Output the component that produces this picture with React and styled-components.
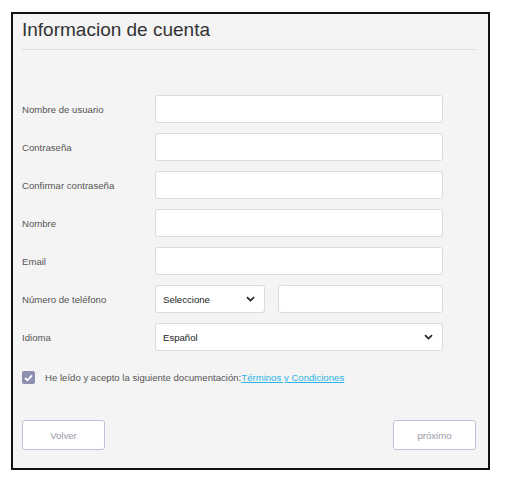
import React from 'react';
import styled, { createGlobalStyle } from 'styled-components';

const GlobalStyle = createGlobalStyle`
  body {
    margin: 0;
    background: #ffffff;
    font-family: "Liberation Sans", Arial, sans-serif;
  }
`;

const Page = styled.div`
  padding: 12px 0 0 11px;
`;

const Panel = styled.section`
  box-sizing: border-box;
  width: 479px;
  height: 458px;
  border: 2px solid #111;
  background: #f4f4f4;
  padding: 0 12px 0 9px;
  display: flex;
  flex-direction: column;
`;

const Title = styled.h1`
  margin: 0;
  padding: 5px 0 8px;
  font-size: 19px;
  line-height: 22px;
  font-weight: normal;
  color: #333;
  border-bottom: 1px solid #dedede;
`;

const Form = styled.div`
  display: grid;
  grid-template-columns: 133px 288px;
  row-gap: 10px;
  align-items: center;
  margin-top: 45px;
`;

const Label = styled.label`
  font-size: 9.6px;
  color: #555;
`;

const Field = styled.div`
  box-sizing: border-box;
  height: 28px;
  background: #fff;
  border: 1px solid #dadada;
  border-radius: 3px;
  display: flex;
  align-items: center;
  justify-content: space-between;
  padding: 0 9px 0 7px;
  font-size: 9.6px;
  color: #222;
`;

const PhoneGroup = styled.div`
  display: grid;
  grid-template-columns: 110px 1fr;
  column-gap: 13px;
`;

const Chevron = () => (
  <svg width="9" height="6" viewBox="0 0 9 6">
    <path d="M1 1.2 L4.5 4.6 L8 1.2" fill="none" stroke="#222" strokeWidth="1.7" />
  </svg>
);

const Select = ({ value }) => (
  <Field>
    <span>{value}</span>
    <Chevron />
  </Field>
);

const Agree = styled.div`
  display: flex;
  align-items: center;
  gap: 10px;
  margin-top: 20px;
  font-size: 9.6px;
  color: #555;
`;

const Box = styled.span`
  width: 13px;
  height: 13px;
  border-radius: 2px;
  background: #8c8fae;
  display: flex;
  align-items: center;
  justify-content: center;
`;

const Link = styled.a`
  color: #2bb5e6;
  text-decoration: underline;
`;

const Actions = styled.div`
  display: flex;
  justify-content: space-between;
  margin-top: auto;
  margin-bottom: 18px;
`;

const Button = styled.button`
  box-sizing: border-box;
  width: 83px;
  height: 30px;
  background: #fff;
  border: 1px solid #bfc1d4;
  border-radius: 3px;
  font-family: inherit;
  font-size: 9.6px;
  color: #999aa6;
`;

const rows = [
  'Nombre de usuario',
  'Contraseña',
  'Confirmar contraseña',
  'Nombre',
  'Email',
];

export default function App() {
  return (
    <Page>
      <GlobalStyle />
      <Panel>
        <Title>Informacion de cuenta</Title>
        <Form>
          {rows.map((r) => (
            <React.Fragment key={r}>
              <Label>{r}</Label>
              <Field />
            </React.Fragment>
          ))}
          <Label>Número de teléfono</Label>
          <PhoneGroup>
            <Select value="Seleccione" />
            <Field />
          </PhoneGroup>
          <Label>Idioma</Label>
          <Select value="Español" />
        </Form>
        <Agree>
          <Box>
            <svg width="9" height="8" viewBox="0 0 9 8">
              <path d="M1 4 L3.4 6.3 L8 1.3" fill="none" stroke="#fff" strokeWidth="1.8" />
            </svg>
          </Box>
          <span>
            He leído y acepto la siguiente documentación:<Link>Términos y Condiciones</Link>
          </span>
        </Agree>
        <Actions>
          <Button>Volver</Button>
          <Button>próximo</Button>
        </Actions>
      </Panel>
    </Page>
  );
}
